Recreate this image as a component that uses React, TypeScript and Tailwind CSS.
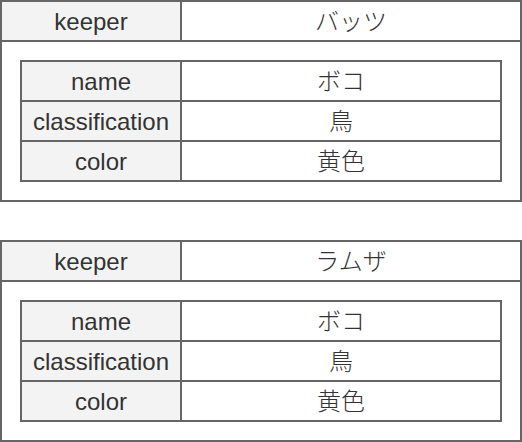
import React from "react";

const font = { fontFamily: '"Liberation Sans", "Noto Sans CJK JP", sans-serif' };

function Card({ keeper }: { keeper: string }) {
  const rows: [string, string][] = [
    ["name", "ボコ"],
    ["classification", "鳥"],
    ["color", "黄色"],
  ];
  return (
    <div className="w-[522px] border-2 border-[#666666] bg-white">
      <div className="flex h-[40px] border-b-2 border-[#666666]">
        <div className="flex w-[180px] items-center justify-center border-r-2 border-[#666666] bg-[#f3f3f3] pt-[1px]">keeper</div>
        <div className="flex flex-1 items-center justify-center pt-[1px] font-light">{keeper}</div>
      </div>
      <div className="p-[18px]">
        <div className="flex flex-col border-2 border-[#666666]">
          {rows.map(([k, v], i) =>
            i < 2 ? (
              <div key={k} className="flex h-[40px] border-b-2 border-[#666666]">
                <div className="flex w-[160px] items-center justify-center border-r-2 border-[#666666] bg-[#f3f3f3] pt-[1px]">{k}</div>
                <div className="flex flex-1 items-center justify-center pt-[1px] font-light">{v}</div>
              </div>
            ) : (
              <div key={k} className="flex h-[38px]">
                <div className="flex w-[160px] items-center justify-center border-r-2 border-[#666666] bg-[#f3f3f3] pt-[1px]">{k}</div>
                <div className="flex flex-1 items-center justify-center pt-[1px] font-light">{v}</div>
              </div>
            )
          )}
        </div>
      </div>
    </div>
  );
}

export default function App() {
  return (
    <div className="flex w-[522px] flex-col gap-[38px] bg-white text-[24px] leading-none text-[#333333]" style={font}>
      <Card keeper="バッツ" />
      <Card keeper="ラムザ" />
    </div>
  );
}
